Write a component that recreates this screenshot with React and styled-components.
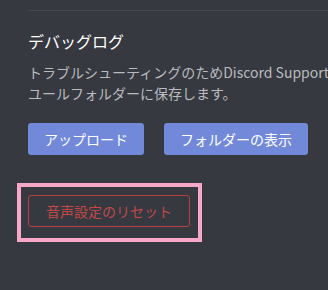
import React from "react";
import styled, { createGlobalStyle } from "styled-components";

const Global = createGlobalStyle`
  html, body {
    margin: 0;
    padding: 0;
    background: #36393f;
    overflow: hidden;
  }
  body {
    font-family: "Noto Sans CJK JP", "Noto Sans", sans-serif;
    -webkit-font-smoothing: antialiased;
  }
`;

const Page = styled.div`
  width: 328px;
  height: 290px;
  background: #36393f;
  overflow: hidden;
  padding-top: 10px;
  box-sizing: border-box;
`;

const Section = styled.section`
  margin-left: 28px;
  width: 700px;
  border-top: 1px solid #45484e;
  padding-top: 20px;
`;

const Title = styled.h2`
  margin: 0 0 11px;
  font-size: 16px;
  line-height: 20px;
  font-weight: 400;
  color: #ffffff;
`;

const Description = styled.p`
  margin: 0;
  font-size: 14px;
  line-height: 21px;
  color: #b9bbbe;
  white-space: nowrap;
`;

const ButtonRow = styled.div`
  display: flex;
  gap: 20px;
  margin-top: 19px;
`;

const Button = styled.button`
  height: 32px;
  padding: 0 16px;
  border-radius: 3px;
  font-family: inherit;
  font-size: 14px;
  line-height: 16px;
  cursor: pointer;
  box-sizing: border-box;
  ${(p) =>
    p.$variant === "danger"
      ? `
    background: transparent;
    border: 1px solid #b9403f;
    color: #c4484a;
    padding: 0 17px;
  `
      : `
    background: #7289da;
    border: none;
    color: #ffffff;
  `}
`;

const ResetArea = styled.div`
  position: relative;
  margin-top: 40px;
  display: inline-block;
`;

const Highlight = styled.div`
  position: absolute;
  left: -11px;
  top: -12px;
  width: 185px;
  height: 59px;
  box-sizing: border-box;
  border: 4px solid #f7a8c6;
  pointer-events: none;
`;

export default function App() {
  return (
    <>
      <Global />
      <Page>
        <Section>
          <Title>デバッグログ</Title>
          <Description>
            トラブルシューティングのためDiscord Supportにデバッグログをアップロードするか、ボイスモジ
            <br />
            ユールフォルダーに保存します。
          </Description>
          <ButtonRow>
            <Button>アップロード</Button>
            <Button>フォルダーの表示</Button>
          </ButtonRow>
          <ResetArea>
            <Button $variant="danger">音声設定のリセット</Button>
            <Highlight />
          </ResetArea>
        </Section>
      </Page>
    </>
  );
}
